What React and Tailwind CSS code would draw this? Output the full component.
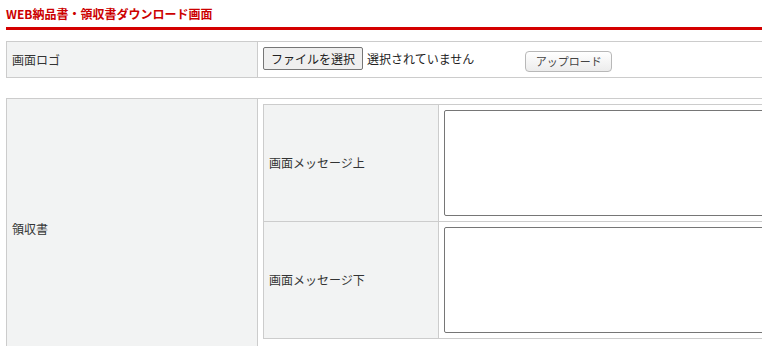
export default function App() {
  const font = "font-['Noto_Sans_CJK_JP','Noto_Sans',sans-serif]";
  return (
    <div className={`w-[762px] h-[346px] overflow-hidden bg-white text-[12px] text-[#333] ${font}`}>
      <div className="pl-[6px] w-[1000px]">
        <div className="h-[27px] pt-[5px] text-[12px] leading-[18px] font-bold text-[#cc0000]">
          WEB納品書・領収書ダウンロード画面
        </div>
        <div className="h-[3px] bg-[#d40000]"></div>

        {/* Logo row */}
        <div className="mt-[11px] flex border border-[#cccccc] h-[37px]">
          <div className="w-[251px] shrink-0 bg-[#f2f3f3] border-r border-[#cccccc] flex items-center pl-[5px] leading-none">
            画面ロゴ
          </div>
          <div className="flex-1 flex items-start pl-[5px] pt-[5px]">
            <div className="h-[23px] w-[100px] border border-[#767676] rounded-[2px] bg-[#efefef] flex items-center justify-center text-[12px] leading-none text-[#222]">
              ファイルを選択
            </div>
            <div className="ml-[4px] h-[23px] flex items-center text-[12px] leading-none text-[#222]">
              選択されていません
            </div>
            <div className="ml-[51px] mt-[4px] h-[21px] w-[87px] border border-[#b8b8b8] rounded-[4px] bg-gradient-to-b from-[#ffffff] to-[#ececec] flex items-center justify-center text-[11px] leading-none text-[#444]">
              アップロード
            </div>
          </div>
        </div>

        {/* Receipt block */}
        <div className="mt-[20px] flex border border-[#cccccc] h-[300px]">
          <div className="w-[251px] shrink-0 bg-[#f2f3f3] border-r border-[#cccccc] flex items-start pl-[5px] pt-[124px] leading-none">
            領収書
          </div>
          <div className="flex-1 p-[5px]">
            <div className="border border-[#cccccc] flex flex-col">
              <div className="flex h-[116px]">
                <div className="w-[175px] shrink-0 bg-[#f2f3f3] border-r border-[#cccccc] flex items-center pl-[5px] leading-none">
                  画面メッセージ上
                </div>
                <div className="flex-1 p-[5px] bg-white">
                  <div className="h-[106px] border border-[#767676] rounded-[2px] bg-white"></div>
                </div>
              </div>
              <div className="flex h-[117px] border-t border-[#cccccc]">
                <div className="w-[175px] shrink-0 bg-[#f2f3f3] border-r border-[#cccccc] flex items-center pl-[5px] leading-none">
                  画面メッセージ下
                </div>
                <div className="flex-1 p-[5px] bg-white">
                  <div className="h-[106px] border border-[#767676] rounded-[2px] bg-white"></div>
                </div>
              </div>
            </div>
          </div>
        </div>
      </div>
    </div>
  );
}
